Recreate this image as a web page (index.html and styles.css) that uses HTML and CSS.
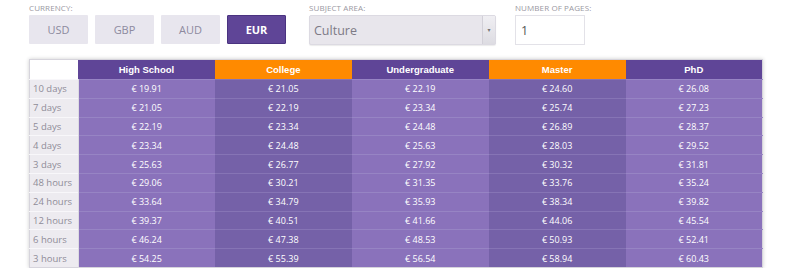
FILE: index.html
```html
<!DOCTYPE html>
<html>
<head>
<meta charset="utf-8">
<link rel="stylesheet" href="styles.css">
</head>
<body>
<div class="page">
  <div class="controls">
    <div class="group">
      <div class="label">CURRENCY:</div>
      <div class="buttons">
        <div class="btn">USD</div>
        <div class="btn">GBP</div>
        <div class="btn">AUD</div>
        <div class="btn active">EUR</div>
      </div>
    </div>
    <div class="group subject">
      <div class="label">SUBJECT AREA:</div>
      <div class="select"><span class="sel-text">Culture</span><span class="sel-arrow">▾</span></div>
    </div>
    <div class="group pages">
      <div class="label">NUMBER OF PAGES:</div>
      <div class="input">1</div>
    </div>
  </div>
  <table class="prices">
    <thead>
      <tr><th class="corner"></th><th class="p">High School</th><th class="o">College</th><th class="p">Undergraduate</th><th class="o">Master</th><th class="p">PhD</th></tr>
    </thead>
    <tbody>
      <tr><td class="rl">10 days</td><td class="l">€ 19.91</td><td class="d">€ 21.05</td><td class="l">€ 22.19</td><td class="d">€ 24.60</td><td class="l">€ 26.08</td></tr>
      <tr><td class="rl">7 days</td><td class="l">€ 21.05</td><td class="d">€ 22.19</td><td class="l">€ 23.34</td><td class="d">€ 25.74</td><td class="l">€ 27.23</td></tr>
      <tr><td class="rl">5 days</td><td class="l">€ 22.19</td><td class="d">€ 23.34</td><td class="l">€ 24.48</td><td class="d">€ 26.89</td><td class="l">€ 28.37</td></tr>
      <tr><td class="rl">4 days</td><td class="l">€ 23.34</td><td class="d">€ 24.48</td><td class="l">€ 25.63</td><td class="d">€ 28.03</td><td class="l">€ 29.52</td></tr>
      <tr><td class="rl">3 days</td><td class="l">€ 25.63</td><td class="d">€ 26.77</td><td class="l">€ 27.92</td><td class="d">€ 30.32</td><td class="l">€ 31.81</td></tr>
      <tr><td class="rl">48 hours</td><td class="l">€ 29.06</td><td class="d">€ 30.21</td><td class="l">€ 31.35</td><td class="d">€ 33.76</td><td class="l">€ 35.24</td></tr>
      <tr><td class="rl">24 hours</td><td class="l">€ 33.64</td><td class="d">€ 34.79</td><td class="l">€ 35.93</td><td class="d">€ 38.34</td><td class="l">€ 39.82</td></tr>
      <tr><td class="rl">12 hours</td><td class="l">€ 39.37</td><td class="d">€ 40.51</td><td class="l">€ 41.66</td><td class="d">€ 44.06</td><td class="l">€ 45.54</td></tr>
      <tr><td class="rl">6 hours</td><td class="l">€ 46.24</td><td class="d">€ 47.38</td><td class="l">€ 48.53</td><td class="d">€ 50.93</td><td class="l">€ 52.41</td></tr>
      <tr><td class="rl">3 hours</td><td class="l">€ 54.25</td><td class="d">€ 55.39</td><td class="l">€ 56.54</td><td class="d">€ 58.94</td><td class="l">€ 60.43</td></tr>
    </tbody>
  </table>
</div>
</body>
</html>
```
FILE: styles.css
```css
html, body {
  margin: 0;
  padding: 0;
  background: #ffffff;
  font-family: "Open Sans", "DejaVu Sans", sans-serif;
}
.page {
  padding: 3px 0 0 29px;
  width: 734px;
}
.controls {
  display: flex;
  align-items: flex-start;
}
.label {
  font-size: 8px;
  color: #9a98a2;
  height: 12px;
  line-height: 10px;
  letter-spacing: 0.1px;
}
.buttons {
  display: flex;
  gap: 7px;
}
.btn {
  width: 59px;
  height: 29px;
  box-sizing: border-box;
  background: #e8e6ee;
  color: #8d8a9e;
  font-size: 11px;
  display: flex;
  align-items: center;
  justify-content: center;
  border-radius: 1px;
}
.btn.active {
  background: #5f4597;
  color: #ffffff;
  font-weight: 700;
  border: 1px solid #4a3380;
}
.subject {
  margin-left: 23px;
}
.select {
  width: 187px;
  height: 30px;
  box-sizing: border-box;
  background: #e8e6ec;
  border: 1px solid #dcdae2;
  border-radius: 2px;
  display: flex;
  align-items: center;
  box-shadow: 0 1px 1px rgba(0,0,0,0.08);
}
.sel-text {
  flex: 1;
  padding-left: 4px;
  font-size: 12.5px;
  color: #7d7a86;
}
.sel-arrow {
  width: 12px;
  height: 28px;
  border-left: 1px solid #d2d0d8;
  background: linear-gradient(#f0eff3, #dddce2);
  font-size: 6px;
  color: #777;
  display: flex;
  align-items: center;
  justify-content: center;
}
.pages {
  margin-left: 19px;
}
.input {
  width: 70px;
  height: 30px;
  box-sizing: border-box;
  border: 1px solid #e3e2e8;
  background: #fff;
  font-size: 12.5px;
  color: #555;
  display: flex;
  align-items: center;
  padding-left: 5px;
}
.prices {
  margin-top: 14px;
  border-collapse: collapse;
  width: 734px;
  table-layout: fixed;
  border: 1px solid #d6d4dc;
  box-shadow: 0 0 4px rgba(0,0,0,0.2);
}
.prices th {
  height: 19px;
  font-family: "Liberation Sans", Arial, sans-serif;
  font-weight: 700;
  font-size: 9.5px;
  color: #ffffff;
  padding: 0;
  text-align: center;
}
.prices th.corner {
  width: 48px;
  background: #ffffff;
}
.prices th.p { background: #5f4597; }
.prices th.o { background: #ff8a00; }
.prices td {
  height: 17.8px;
  padding: 0;
  font-size: 9px;
  color: #ffffff;
  text-align: center;
  border-top: 1px solid #9784c4;
}
.prices td.rl {
  background: #edebf0;
  color: #8f8c98;
  text-align: left;
  padding-left: 3px;
  font-size: 9.5px;
  border-top: 1px solid #f8f7fa;
  border-right: 1px solid #dddbe2;
}
.prices td.l { background: #8a72bb; }
.prices td.d { background: #7561a8; border-top-color: #8674b5; }
```
